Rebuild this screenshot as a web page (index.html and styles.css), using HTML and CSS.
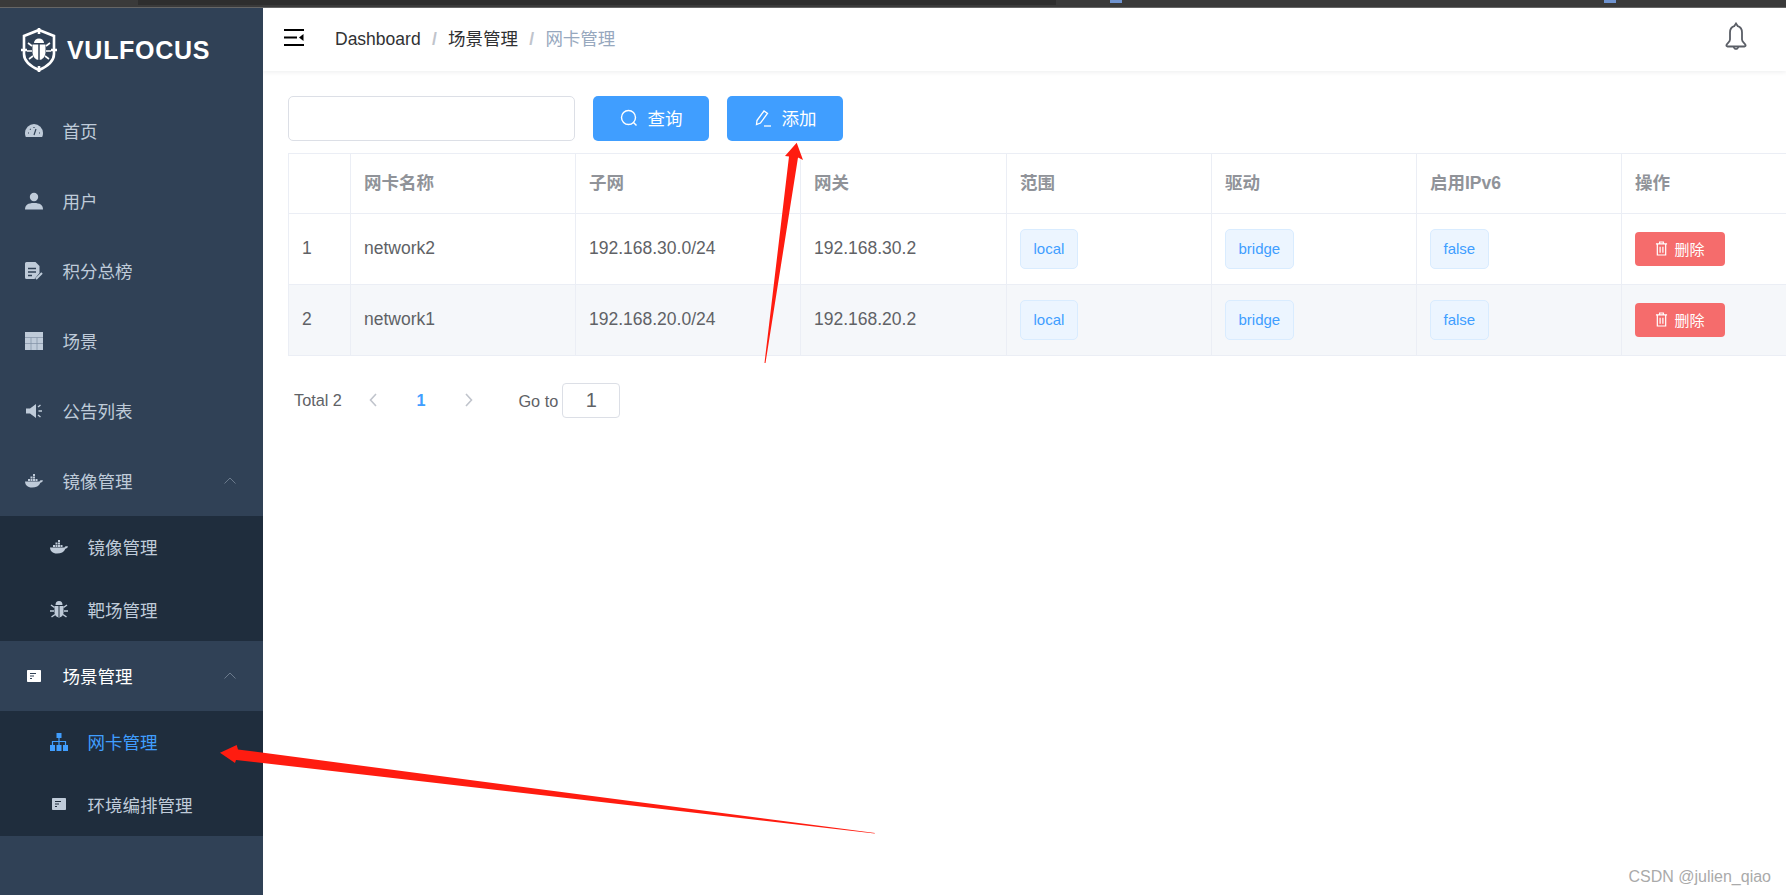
FILE: index.html
```html
<!DOCTYPE HTML>
<html>
<head>
<meta http-equiv="Content-Type" content="text/html; charset=utf-8">
<title>网卡管理</title>
<link rel="stylesheet" href="styles.css">
</head>
<body>
	<!-- 顶部窗口条 -->
	<div class="strip">
		<span class="strip-tab"></span>
		<span class="strip-dot"></span>
		<span class="strip-dot strip-dot2"></span>
	</div>
	<div class="app">
		<!-- 左侧菜单 -->
		<div class="side">
			<div class="logo">
				<svg class="logo-icon" viewBox="0 0 36 44" width="36" height="44">
					<path d="M18 2 L33 8 V26 C33 34 25 39 18 42 C11 39 3 34 3 26 V8 Z" fill="none" stroke="#fff" stroke-width="2.6"/>
					<path d="M18 0v6M18 38v6M0 22h6M30 22h6" stroke="#fff" stroke-width="2.6" />
					<path d="M13 15a5 4.5 0 0 1 10 0z" fill="#fff"/>
					<path d="M11.500 16.500h13v8a6.500 7.500 0 0 1-13 0z" fill="#fff"/>
					<path d="M18 16v16" stroke="#304156" stroke-width="1.500"/>
					<path d="M11 18l-4-3M25 18l4-3M11 23H6M25 23h5M12 28l-4 3M24 28l4 3" stroke="#fff" stroke-width="1.600"/>
				</svg>
				<span class="logo-text">VULFOCUS</span>
			</div>
			<div class="item">
				<svg class="ico" viewBox="0 0 18 18"><path d="M9 2a9 9 0 0 0-9 9c0 1.800.3 3 .9 4h16.200c.6-1 .9-2.200 .9-4a9 9 0 0 0-9-9z" fill="#bfcbd9"/><path d="M9 13l2-6M3 11h1M14 11h1M5 7l.7.7M9 5v1" stroke="#304156" stroke-width="1.200" fill="none"/></svg>
				<span>首页</span>
			</div>
			<div class="item">
				<svg class="ico" viewBox="0 0 18 18"><circle cx="9" cy="5" r="4.200" fill="#bfcbd9"/><path d="M0 17.500c0-4.500 3-6.500 9-6.500s9 2 9 6.500z" fill="#bfcbd9"/></svg>
				<span>用户</span>
			</div>
			<div class="item">
				<svg class="ico" viewBox="0 0 18 18"><path d="M1.500 0h9l4 4v7l-5 6h-8a1.500 1.500 0 0 1-1.500-1.500v-14a1.500 1.500 0 0 1 1.500-1.500z" fill="#bfcbd9"/><path d="M3 6.500h8M3 10h8M3 13.500h4" stroke="#304156" stroke-width="1.300"/><path d="M11 17l6-6" stroke="#bfcbd9" stroke-width="2"/></svg>
				<span>积分总榜</span>
			</div>
			<div class="item">
				<svg class="ico" viewBox="0 0 18 18"><path d="M0 0h18v18H0z" fill="#bfcbd9"/><path d="M0 5.500h18M0 11.500h18M6 5.500V18M12 5.500V18" stroke="#7f8fa3" stroke-width=".7"/></svg>
				<span>场景</span>
			</div>
			<div class="item">
				<svg class="ico" viewBox="0 0 18 18"><path d="M1 6.500h4l6-4.500v14l-6-4.500H1z" fill="#bfcbd9"/><path d="M13 5l2.500-2M13.500 9H17M13 13l2.500 2" stroke="#bfcbd9" stroke-width="1.400"/></svg>
				<span>公告列表</span>
			</div>
			<div class="item">
				<svg class="ico" viewBox="0 0 18 18"><use href="#whale"/></svg>
				<span>镜像管理</span>
				<svg class="arrow-up" viewBox="0 0 12 7"><path d="M.5 6.500L6 1l5.500 5.500" fill="none" stroke="#6b7a8c" stroke-width="1"/></svg>
			</div>
			<div class="sub">
				<div class="sub-item">
					<svg class="ico" viewBox="0 0 18 18"><use href="#whale"/></svg>
					<span>镜像管理</span>
				</div>
				<div class="sub-item">
					<svg class="ico" viewBox="0 0 18 18"><path d="M5.500 5a3.500 4 0 0 1 7 0z" fill="#bfcbd9"/><path d="M4.500 6h9v6.500a4.500 5 0 0 1-9 0z" fill="#bfcbd9"/><path d="M9 6v11" stroke="#1f2d3d" stroke-width="1"/><path d="M4.500 7.500L1 5M13.500 7.500L17 5M4 11H0M14 11h4M5 14.500L1.500 17M13 14.500l3.500 2.500" stroke="#bfcbd9" stroke-width="1.500"/></svg>
					<span>靶场管理</span>
				</div>
			</div>
			<div class="item item-on">
				<svg class="ico ico-sm" viewBox="0 0 14 12"><use href="#form" fill="#fff"/><path d="M3 3.500h6M3 6h4M3 8.500h2" stroke="#304156" stroke-width="1.200"/></svg>
				<span>场景管理</span>
				<svg class="arrow-up" viewBox="0 0 12 7"><path d="M.5 6.500L6 1l5.500 5.500" fill="none" stroke="#6b7a8c" stroke-width="1"/></svg>
			</div>
			<div class="sub">
				<div class="sub-item sub-on">
					<svg class="ico" viewBox="0 0 18 18"><path d="M6.500 0h5v5h-5zM0 12h5v6H0zM6.500 12h5v6h-5zM13 12h5v6h-5z" fill="#409eff"/><path d="M9 5v7M2.500 12V8.500h13V12" stroke="#409eff" stroke-width="1.200" fill="none"/></svg>
					<span>网卡管理</span>
				</div>
				<div class="sub-item">
					<svg class="ico ico-sm" viewBox="0 0 14 12"><use href="#form" fill="#bfcbd9"/><path d="M3 3.500h6M3 6h4M3 8.500h2" stroke="#1f2d3d" stroke-width="1.200"/></svg>
					<span>环境编排管理</span>
				</div>
			</div>
		</div>

		<!-- 右侧内容 -->
		<div class="main">
			<div class="navbar">
				<svg class="burger" viewBox="0 0 20 17"><path d="M0 1h20M0 8.500h13M0 16h20" stroke="#000" stroke-width="2"/><path d="M19.500 5v7L15 8.500z" fill="#000"/></svg>
				<div class="crumb">
					<span>Dashboard</span><i>/</i><span>场景管理</span><i>/</i><span class="crumb-last">网卡管理</span>
				</div>
				<svg class="bell" viewBox="0 0 24 28"><path d="M12 1.500l1.800 2.700c3 .9 4.200 3.300 4.200 6.300v7c0 2.500 2.500 3.500 3.500 5.500 .3 .9-.2 1.500-1 1.500H3.500c-.8 0-1.300-.6-1-1.500C3.500 21 6 20 6 17.500v-7c0-3 1.200-5.400 4.200-6.300z" fill="none" stroke="#5a5e66" stroke-width="1.800"/><path d="M9.500 24.500c.4 1.500 1.300 2.500 2.500 2.500s2.100-1 2.500-2.500" fill="none" stroke="#5a5e66" stroke-width="1.600"/></svg>
			</div>

			<div class="content">
				<div class="tools">
					<input class="search" type="text">
					<div class="btn">
						<svg viewBox="0 0 18 18" width="18" height="18"><circle cx="8.500" cy="8.500" r="7" fill="none" stroke="#fff" stroke-width="1.400"/><path d="M13.500 13.500l3 3" stroke="#fff" stroke-width="1.400"/></svg>
						<span>查询</span>
					</div>
					<div class="btn">
						<svg viewBox="0 0 18 18" width="18" height="18"><path d="M3 11.500L10 2l3.500 2.500-7 9.500-4 1.500z" fill="none" stroke="#fff" stroke-width="1.300"/><path d="M10 17h7" stroke="#fff" stroke-width="1.300"/></svg>
						<span>添加</span>
					</div>
				</div>

				<table class="grid">
					<colgroup>
						<col class="c-no"><col class="c-wide"><col class="c-wide"><col class="c-gate"><col class="c-std"><col class="c-std"><col class="c-std"><col class="c-std">
					</colgroup>
					<thead>
						<tr><th></th><th>网卡名称</th><th>子网</th><th>网关</th><th>范围</th><th>驱动</th><th>启用IPv6</th><th>操作</th></tr>
					</thead>
					<tbody>
						<tr>
							<td>1</td><td>network2</td><td>192.168.30.0/24</td><td>192.168.30.2</td>
							<td><span class="tag">local</span></td><td><span class="tag">bridge</span></td><td><span class="tag">false</span></td>
							<td><span class="del"><svg viewBox="0 0 14 16" width="13" height="15"><use href="#trash"/></svg>删除</span></td>
						</tr>
						<tr class="odd">
							<td>2</td><td>network1</td><td>192.168.20.0/24</td><td>192.168.20.2</td>
							<td><span class="tag">local</span></td><td><span class="tag">bridge</span></td><td><span class="tag">false</span></td>
							<td><span class="del"><svg viewBox="0 0 14 16" width="13" height="15"><use href="#trash"/></svg>删除</span></td>
						</tr>
					</tbody>
				</table>

				<div class="pager">
					<span class="total">Total 2</span>
					<svg class="chev" viewBox="0 0 8 14"><path d="M7 1L1.500 7 7 13" fill="none" stroke="#c0c4cc" stroke-width="1.600"/></svg>
					<span class="page-no">1</span>
					<svg class="chev" viewBox="0 0 8 14"><path d="M1 1l5.500 6L1 13" fill="none" stroke="#c0c4cc" stroke-width="1.600"/></svg>
					<span class="goto">Go to</span>
					<span class="goto-box">1</span>
				</div>
			</div>
		</div>
	</div>

	<!-- 红色标注箭头 -->
	<svg class="marks" viewBox="0 0 1786 895" width="1786" height="895">
		<path d="M796.700 142.700L803 160 798 157.500 765.500 363 764.500 363 789 156.500 785 156z" fill="#ff1c10"/>
		<path d="M220 752.700L236.700 745 238 749.500 875 833 874.500 833.500 236 760 235 763z" fill="#ff1c10"/>
	</svg>
	<div class="mark-text">CSDN @julien_qiao</div>

	<!-- 公用图形 -->
	<svg class="defs" width="0" height="0">
		<symbol id="whale" viewBox="0 0 18 18">
			<path d="M0 9.500h14.500c.3-1.200 1.800-1.700 3.500-1-.5 1.500-1.500 2-2.600 2.200C14 14 11 15.500 7 15.500c-4.500 0-6.800-2.500-7-6z" fill="#bfcbd9"/>
			<path d="M3 7h2v2H3zM5.500 7h2v2h-2zM8 7h2v2H8zM5.500 4.500h2v2h-2zM8 4.500h2v2H8zM8 2h2v2H8zM10.500 7h2v2h-2z" fill="#bfcbd9"/>
		</symbol>
		<symbol id="form" viewBox="0 0 14 12">
			<path d="M.8 0h12.400a.8 .8 0 0 1 .8 .8v10.400a.8 .8 0 0 1-.8 .8H.8a.8 .8 0 0 1-.8-.8V.8A.8 .8 0 0 1 .8 0z"/>
		</symbol>
		<symbol id="trash" viewBox="0 0 14 16">
			<path d="M1 3h12M5 3V1h4v2M2.500 3v12h9V3M5.500 6v6.500M8.500 6v6.500" fill="none" stroke="#fff" stroke-width="1.300"/>
		</symbol>
	</svg>
</body>
</html>
```

FILE: styles.css
```css
* {
	box-sizing: border-box;
}
html, body {
	margin: 0;
	height: 100%;
	overflow: hidden;
	background: #fff;
	font-family: "Liberation Sans", "Noto Sans CJK SC", sans-serif;
}

/* 顶部窗口条 */
.strip {
	display: flex;
	height: 8px;
	background: #3a3a3a;
	border-bottom: 1px solid #666;
}
.strip-tab {
	width: 918px;
	height: 5px;
	margin-left: 138px;
	background: #2e2e2e;
}
.strip-dot {
	width: 12px;
	height: 3px;
	margin-left: 54px;
	background: #6f93cf;
}
.strip-dot2 {
	margin-left: 482px;
}

.app {
	display: flex;
	height: 887px;
}

/* 左侧菜单 */
.side {
	flex: none;
	width: 263px;
	background: #304156;
	color: #bfcbd9;
	font-size: 17.5px;
}
.logo {
	display: flex;
	align-items: center;
	gap: 10px;
	height: 87.5px;
	padding: 0 0 3px 21px;
}
.logo-text {
	color: #fff;
	font-size: 25px;
	font-weight: bold;
	letter-spacing: .7px;
}
.item {
	display: flex;
	align-items: center;
	height: 70px;
	padding-left: 25px;
}
.item-on {
	color: #fff;
}
.sub {
	background: #1f2d3d;
}
.sub-item {
	display: flex;
	align-items: center;
	height: 62.5px;
	padding-left: 50px;
}
.sub-on {
	color: #409eff;
}
.ico {
	flex: none;
	width: 18px;
	height: 18px;
	margin-right: 19.5px;
}
.ico-sm {
	width: 14px;
	height: 12px;
	margin: 0 21.5px 0 2px;
}
.arrow-up {
	width: 12px;
	height: 7px;
	margin-left: auto;
	margin-right: 27px;
}

/* 右侧内容 */
.main {
	flex: 1;
	min-width: 0;
	overflow: hidden;
}
.navbar {
	display: flex;
	align-items: center;
	height: 62.5px;
	padding: 0 38px 4px 21px;
	box-shadow: 0 1px 5px rgba(0, 21, 41, .08);
}
.burger {
	width: 20px;
	height: 17px;
	margin-right: 31px;
}
.crumb {
	color: #303133;
	font-size: 17.5px;
}
.crumb i {
	margin: 0 11.25px;
	color: #c0c4cc;
	font-style: normal;
	font-weight: bold;
}
.crumb-last {
	color: #97a8be;
}
.bell {
	width: 24px;
	height: 28px;
	margin-left: auto;
	margin-bottom: 2px;
}

.content {
	padding: 25px 0 0 25px;
}
.tools {
	display: flex;
	gap: 18px;
	margin-bottom: 12px;
}
.search {
	width: 287px;
	height: 45px;
	border: 1px solid #dcdfe6;
	border-radius: 5px;
}
.btn {
	display: flex;
	align-items: center;
	justify-content: center;
	gap: 10px;
	width: 116px;
	height: 45px;
	background: #409eff;
	border-radius: 5px;
	color: #fff;
	font-size: 17.5px;
}
.btn span {
	margin-bottom: 2px;
}

.grid {
	table-layout: fixed;
	width: 1539px;
	border-collapse: collapse;
	color: #606266;
	font-size: 17.5px;
}
.c-no { width: 62px; }
.c-wide { width: 225px; }
.c-gate { width: 206px; }
.c-std { width: 205px; }
.grid th, .grid td {
	padding: 0 13px;
	border: 1px solid #ebeef5;
	text-align: left;
}
.grid th {
	height: 60px;
	padding-bottom: 4px;
	color: #909399;
	font-weight: bold;
}
.grid td {
	height: 71px;
}
.odd td {
	background: #f5f7fa;
}
.tag {
	display: inline-block;
	height: 40px;
	padding: 0 12.5px;
	background: #ecf5ff;
	border: 1px solid #d9ecff;
	border-radius: 5px;
	color: #409eff;
	font-size: 15px;
	line-height: 38px;
	vertical-align: middle;
}
.del {
	display: inline-flex;
	align-items: center;
	justify-content: center;
	gap: 6px;
	width: 90px;
	height: 34px;
	background: #f56c6c;
	border-radius: 4px;
	color: #fff;
	font-size: 15px;
	vertical-align: middle;
}

.pager {
	display: flex;
	align-items: center;
	height: 35px;
	margin-top: 27px;
	padding-left: 6px;
	color: #606266;
	font-size: 16.25px;
}
.chev {
	width: 8px;
	height: 14px;
}
.total {
	margin-right: 27px;
}
.page-no {
	margin: 0 40px 0 39.5px;
	color: #409eff;
	font-weight: bold;
}
.goto {
	margin: 2px 4px 0 45px;
}
.goto-box {
	width: 58px;
	height: 35px;
	border: 1px solid #dcdfe6;
	border-radius: 4px;
	font-size: 20px;
	line-height: 33px;
	text-align: center;
}

/* 标注层 */
.marks {
	position: absolute;
	left: 0;
	top: 0;
}
.mark-text {
	position: absolute;
	right: 15px;
	top: 868px;
	color: #aaa;
	font-size: 16px;
}
.defs {
	position: absolute;
}
```
